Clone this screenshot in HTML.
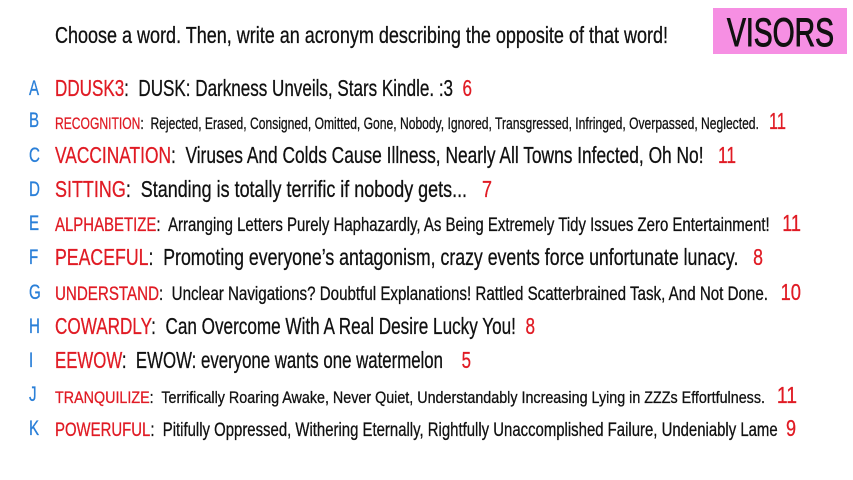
<!DOCTYPE html>
<html><head><meta charset="utf-8"><style>
body{margin:0;width:853px;height:480px;background:#fff;overflow:hidden;position:relative;font-family:"Liberation Sans Narrow","Liberation Sans",sans-serif;}
.ln{position:absolute;left:55px;white-space:nowrap;transform-origin:0 50%;color:#111;line-height:1;-webkit-text-stroke:0.3px currentColor;}
.lt{position:absolute;left:29px;color:#2a7fd8;font-size:21px;line-height:1;transform:scaleX(0.72);transform-origin:0 50%;-webkit-text-stroke:0.3px currentColor;}
.r{color:#e01b24}
.n{color:#e01b24}
#vis{position:absolute;left:713px;top:8px;width:134px;height:46px;background:#f68fe3;}
#vis span{position:absolute;left:14px;top:3px;font-size:40px;color:#111;white-space:nowrap;transform-origin:0 0;-webkit-text-stroke:1px #111;}
</style></head><body>
<div id="vis"><span>VISORS</span></div>
<div class="ln" style="top:24px;font-size:23px;width:613px">Choose a word. Then, write an acronym describing the opposite of that word!</div>

<div class="lt" style="top:78px">A</div>
<div class="ln" style="top:77px;font-size:23px;width:417px"><span class="r">DDUSK3</span>:&nbsp; DUSK: Darkness Unveils, Stars Kindle. :3&nbsp; <span class="n">6</span></div>

<div class="lt" style="top:110px">B</div>
<div class="ln" style="top:110px;font-size:17px;width:731px"><span class="r">RECOGNITION</span>:&nbsp; Rejected, Erased, Consigned, Omitted, Gone, Nobody, Ignored, Transgressed, Infringed, Overpassed, Neglected.&nbsp;&nbsp; <span class="n" style="font-size:23px">11</span></div>

<div class="lt" style="top:145px">C</div>
<div class="ln" style="top:144px;font-size:23px;width:681px"><span class="r">VACCINATION</span>:&nbsp; Viruses And Colds Cause Illness, Nearly All Towns Infected, Oh No!&nbsp;&nbsp; <span class="n">11</span></div>

<div class="lt" style="top:179px">D</div>
<div class="ln" style="top:178px;font-size:23px;width:437px"><span class="r">SITTING</span>:&nbsp; Standing is totally terrific if nobody gets...&nbsp;&nbsp; <span class="n">7</span></div>

<div class="lt" style="top:213px">E</div>
<div class="ln" style="top:212px;font-size:19px;width:746px"><span class="r">ALPHABETIZE</span>:&nbsp; Arranging Letters Purely Haphazardly, As Being Extremely Tidy Issues Zero Entertainment!&nbsp;&nbsp; <span class="n" style="font-size:23px">11</span></div>

<div class="lt" style="top:247px">F</div>
<div class="ln" style="top:246px;font-size:23px;width:708px"><span class="r">PEACEFUL</span>:&nbsp; Promoting everyone’s antagonism, crazy events force unfortunate lunacy.&nbsp;&nbsp; <span class="n">8</span></div>

<div class="lt" style="top:282px">G</div>
<div class="ln" style="top:281px;font-size:19px;width:746px"><span class="r">UNDERSTAND</span>:&nbsp; Unclear Navigations? Doubtful Explanations! Rattled Scatterbrained Task, And Not Done.&nbsp;&nbsp; <span class="n" style="font-size:23px">10</span></div>

<div class="lt" style="top:316px">H</div>
<div class="ln" style="top:315px;font-size:23px;width:480px"><span class="r">COWARDLY</span>:&nbsp; Can Overcome With A Real Desire Lucky You!&nbsp; <span class="n">8</span></div>

<div class="lt" style="top:350px">I</div>
<div class="ln" style="top:349px;font-size:23px;width:416px"><span class="r">EEWOW</span>:&nbsp; EWOW: everyone wants one watermelon&nbsp;&nbsp;&nbsp; <span class="n">5</span></div>

<div class="lt" style="top:384px">J</div>
<div class="ln" style="top:384px;font-size:17px;width:742px"><span class="r">TRANQUILIZE</span>:&nbsp; Terrifically Roaring Awake, Never Quiet, Understandably Increasing Lying in ZZZs Effortfulness.&nbsp;&nbsp; <span class="n" style="font-size:23px">11</span></div>

<div class="lt" style="top:418px">K</div>
<div class="ln" style="top:417px;font-size:19px;width:741px"><span class="r">POWERUFUL</span>:&nbsp; Pitifully Oppressed, Withering Eternally, Rightfully Unaccomplished Failure, Undeniably Lame&nbsp; <span class="n" style="font-size:23px">9</span></div>

<script>
document.querySelectorAll('.ln').forEach(function(el){var w=parseFloat(el.style.width);el.style.width='auto';el.style.display='inline-block';var nw=el.getBoundingClientRect().width;if(nw>0)el.style.transform='scaleX('+(w/nw)+')';});
var v=document.querySelector('#vis span');var vw=v.getBoundingClientRect().width;v.style.transform='scaleX('+(107/vw)+')';
</script>
</body></html>
